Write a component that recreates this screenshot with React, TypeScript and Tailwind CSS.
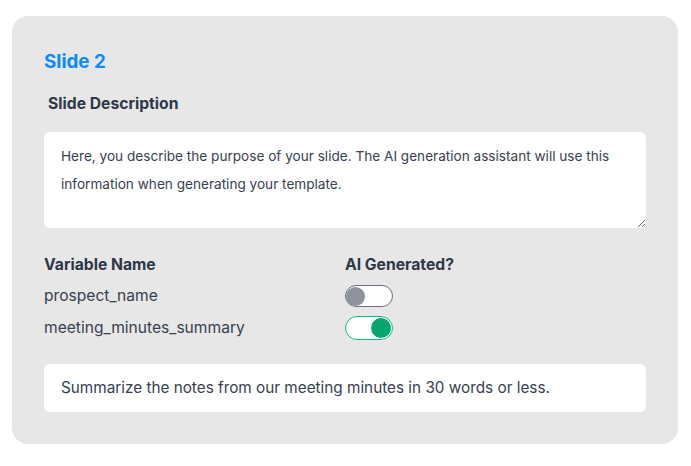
import React from "react";

function Toggle({ on }: { on: boolean }) {
  return (
    <div
      className={
        on
          ? "flex h-[24px] w-[48px] items-center justify-end rounded-full border border-[#10b981] bg-white px-[1px]"
          : "flex h-[22px] w-[48px] items-center justify-start rounded-full border-[1.5px] border-[#6b7280] bg-white px-[0px]"
      }
    >
      <div
        className={
          on
            ? "h-[20px] w-[20px] rounded-full bg-[#03a66d]"
            : "h-[19px] w-[19px] rounded-full bg-[#8f939b]"
        }
      />
    </div>
  );
}

export default function App() {
  return (
    <div
      className="min-h-[466px] w-[691px] bg-white pl-[12px] pt-[16px]"
      style={{ fontFamily: "Inter, 'Noto Sans', sans-serif" }}
    >
      <div className="flex h-[428px] w-[666px] flex-col rounded-[16px] bg-[#e7e7e7] px-[32px] pt-[32px]">
        <h2 className="text-[18.8px] font-bold leading-[28px] text-[#0a8cff]">Slide 2</h2>
        <div className="mt-[16px] pl-[4px] text-[15.7px] font-bold leading-[24px] text-[#2d3748]">
          Slide Description
        </div>
        <textarea
          readOnly
          defaultValue="Here, you describe the purpose of your slide. The AI generation assistant will use this information when generating your template."
          className="mt-[16px] h-[96px] w-[602px] resize-y rounded-[6px] bg-white px-[17px] pt-[10px] text-[13.6px] leading-[28px] text-[#374151] outline-none"
          style={{ fontFamily: "Inter, 'Noto Sans', sans-serif" }}
        />
        <div className="mt-[25px] grid grid-cols-2 text-[15.6px] leading-[24px]">
          <div className="text-[15.7px] font-bold text-[#2d3748]">Variable Name</div>
          <div className="text-[15.7px] font-bold text-[#2d3748]">AI Generated?</div>
          <div className="mt-[7px] flex h-[24px] items-center text-[#374151]">prospect_name</div>
          <div className="mt-[7px] flex h-[24px] items-center">
            <Toggle on={false} />
          </div>
          <div className="mt-[8px] flex h-[24px] items-center text-[#374151]">meeting_minutes_summary</div>
          <div className="mt-[8px] flex h-[24px] items-center">
            <Toggle on={true} />
          </div>
        </div>
        <div className="mt-[24px] flex h-[48px] w-[602px] items-center rounded-[6px] bg-white px-[17px] text-[15.3px] text-[#374151]">
          Summarize the notes from our meeting minutes in 30 words or less.
        </div>
      </div>
    </div>
  );
}
